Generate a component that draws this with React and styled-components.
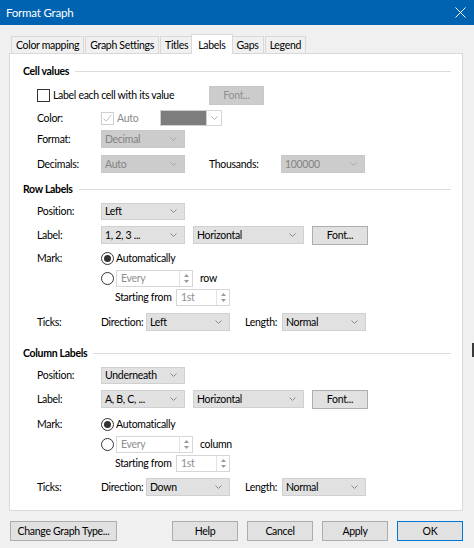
import React from 'react';
import styled, { createGlobalStyle } from 'styled-components';

const GlobalStyle = createGlobalStyle`
  html, body {
    margin: 0;
    padding: 0;
    background: #f0f0f0;
  }
  body {
    font-family: Lato, "Noto Sans", sans-serif;
    font-size: 10.5px;
    letter-spacing: -0.3px;
    color: #000;
  }
`;

const Chevron = ({ color = '#8a8a8a' }) => (
  <svg width="7" height="4" viewBox="0 0 7 4">
    <polyline points="0.5,0.5 3.5,3.5 6.5,0.5" fill="none" stroke={color} strokeWidth="1" />
  </svg>
);

const Combo = ({ w, h = 18, value, disabled }) => (
  <ComboBox $w={w} $h={h} $disabled={disabled}>
    <span>{value}</span>
    <Chevron color={disabled ? '#a8a8a8' : '#8a8a8a'} />
  </ComboBox>
);

const Spinner = ({ w, value }) => (
  <SpinBox $w={w}>
    <SpinText>{value}</SpinText>
    <SpinArrows>
      <svg width="5" height="3" viewBox="0 0 5 3"><polygon points="0,3 2.5,0 5,3" fill="#9a9a9a" /></svg>
      <svg width="5" height="3" viewBox="0 0 5 3"><polygon points="0,0 2.5,3 5,0" fill="#9a9a9a" /></svg>
    </SpinArrows>
  </SpinBox>
);

const Check = ({ checked, disabled }) => (
  <CheckBox $disabled={disabled}>
    {checked && (
      <svg width="11" height="11" viewBox="0 0 11 11">
        <polyline points="1.5,5.5 4.2,8.2 9.5,1.8" fill="none" stroke={disabled ? '#c2c2c2' : '#333'} strokeWidth="1" />
      </svg>
    )}
  </CheckBox>
);

const Heading = ({ children, mt }) => (
  <HeadRow $mt={mt}>
    <HeadText>{children}</HeadText>
    <HeadLine />
  </HeadRow>
);

const LabelsBlock = ({ kind, position, label, tick, top }) => (
  <>
    <Heading mt={top}>{kind === 'row' ? 'Row Labels' : 'Column Labels'}</Heading>
    <Row $mt={3} $h={18}>
      <FieldLabel>Position:</FieldLabel>
      <Combo w={84} h={17} value={position} />
    </Row>
    <Row $mt={5}>
      <FieldLabel>Label:</FieldLabel>
      <Combo w={84} value={label} />
      <Gap $w={8} />
      <Combo w={111} value="Horizontal" />
      <Gap $w={8} />
      <Button $w={56} $h={19}>Font...</Button>
    </Row>
    <Row $mt={kind === 'row' ? 3 : 5}>
      <FieldLabel>Mark:</FieldLabel>
      <Radio $on />
      <OptText>Automatically</OptText>
    </Row>
    <Row $mt={0}>
      <Indent />
      <Radio />
      <Gap $w={2} />
      <Spinner w={77} value="Every" />
      <Gap $w={7} />
      <span>{kind === 'row' ? 'row' : 'column'}</span>
    </Row>
    <Row $mt={-1}>
      <Indent />
      <Gap $w={14} />
      <StartLabel>Starting from</StartLabel>
      <Spinner w={54} value="1st" />
    </Row>
    <Row $mt={kind === 'row' ? 5 : 4}>
      <FieldLabel>Ticks:</FieldLabel>
      <FieldLabel $w={45}>Direction:</FieldLabel>
      <Combo w={84} value={tick} />
      <Gap $w={15} />
      <FieldLabel $w={37}>Length:</FieldLabel>
      <Combo w={84} value="Normal" />
    </Row>
  </>
);

const App = () => {
  return (
    <Window>
      <GlobalStyle />
      <TitleBar>
        <TitleText>Format Graph</TitleText>
        <svg width="11" height="11" viewBox="0 0 11 11">
          <path d="M0.5 0.5 L10.5 10.5 M10.5 0.5 L0.5 10.5" stroke="#fff" strokeWidth="1" />
        </svg>
      </TitleBar>

      <Body>
        <TabStrip>
          <Tab>Color mapping</Tab>
          <Tab>Graph Settings</Tab>
          <Tab>Titles</Tab>
          <Tab $active>Labels</Tab>
          <Tab>Gaps</Tab>
          <Tab>Legend</Tab>
        </TabStrip>

        <Panel>
          <Heading mt={7}>Cell values</Heading>
          <Row $mt={4}>
            <Check />
            <CheckText $w={156}>Label each cell with its value</CheckText>
            <Button $w={55} $h={19} disabled>Font...</Button>
          </Row>
          <Row $mt={3}>
            <FieldLabel>Color:</FieldLabel>
            <Check checked disabled />
            <CheckText $w={43} $muted>Auto</CheckText>
            <ColorWell>
              <Swatch />
              <WellArrow><Chevron color="#b0b0b0" /></WellArrow>
            </ColorWell>
          </Row>
          <Row $mt={1}>
            <FieldLabel>Format:</FieldLabel>
            <Combo w={84} value="Decimal" disabled />
          </Row>
          <Row $mt={5}>
            <FieldLabel>Decimals:</FieldLabel>
            <Combo w={84} value="Auto" disabled />
            <Gap $w={24} />
            <FieldLabel $w={72}>Thousands:</FieldLabel>
            <Combo w={84} value="100000" disabled />
          </Row>

          <LabelsBlock kind="row" top={5} position="Left" label="1, 2, 3 ..." tick="Left" />
          <LabelsBlock kind="col" top={11} position="Underneath" label="A, B, C, ..." tick="Down" />
        </Panel>

        <Footer>
          <Button $w={107} $h={20}>Change Graph Type...</Button>
          <FooterRight>
            <Button $w={66} $h={20}>Help</Button>
            <Button $w={66} $h={20}>Cancel</Button>
            <Button $w={66} $h={20}>Apply</Button>
            <Button $w={66} $h={20} $primary>OK</Button>
          </FooterRight>
        </Footer>
      </Body>

      <EdgeMark />
    </Window>
  );
};

const Window = styled.div`
  position: relative;
  width: 474px;
  height: 548px;
  overflow: hidden;
  background: #f0f0f0;
`;

const TitleBar = styled.div`
  height: 25px;
  background: #0063b1;
  color: #fff;
  display: flex;
  align-items: center;
  justify-content: space-between;
  padding: 0 8px 0 6px;
  box-sizing: border-box;
`;

const TitleText = styled.span`
  font-size: 11.5px;
  letter-spacing: -0.2px;
`;

const Body = styled.div`
  padding: 9px 11px 0 9px;
`;

const TabStrip = styled.div`
  display: flex;
  align-items: flex-end;
  height: 19px;
  padding-left: 1px;
`;

const Tab = styled.div`
  position: relative;
  box-sizing: border-box;
  height: ${p => (p.$active ? 20 : 17)}px;
  padding: 0 ${p => (p.$active ? 6 : 4)}px;
  margin: 0 ${p => (p.$active ? -2 : 0)}px ${p => (p.$active ? -1 : 0)}px ${p => (p.$active ? -2 : 1)}px;
  display: flex;
  align-items: center;
  background: ${p => (p.$active ? '#fff' : '#f0f0f0')};
  border: 1px solid #d9d9d9;
  border-bottom: none;
  z-index: ${p => (p.$active ? 2 : 1)};
  white-space: nowrap;
`;

const Panel = styled.div`
  position: relative;
  z-index: 1;
  height: 458px;
  box-sizing: border-box;
  background: #fff;
  border: 1px solid #d9d9d9;
  display: flex;
  flex-direction: column;
`;

const HeadRow = styled.div`
  display: flex;
  align-items: center;
  height: 20px;
  margin-top: ${p => p.$mt || 0}px;
  padding: 0 11px 0 13px;
`;

const HeadText = styled.span`
  font-weight: bold;
`;

const HeadLine = styled.div`
  flex: 1;
  height: 1px;
  background: #dcdcdc;
  margin-left: 6px;
`;

const Row = styled.div`
  display: flex;
  align-items: center;
  height: ${p => p.$h || 20}px;
  margin-top: ${p => p.$mt || 0}px;
  padding-left: 27px;
  white-space: nowrap;
`;

const FieldLabel = styled.span`
  width: ${p => p.$w || 64}px;
  flex-shrink: 0;
`;

const Indent = styled.span`
  width: 64px;
  flex-shrink: 0;
`;

const Gap = styled.span`
  width: ${p => p.$w}px;
  flex-shrink: 0;
`;

const StartLabel = styled.span`
  width: 61px;
  flex-shrink: 0;
`;

const OptText = styled.span`
  margin-left: 2px;
`;

const CheckText = styled.span`
  width: ${p => p.$w}px;
  flex-shrink: 0;
  margin-left: 3px;
  color: ${p => (p.$muted ? '#8a8a8a' : '#000')};
`;

const CheckBox = styled.span`
  width: 13px;
  height: 13px;
  box-sizing: border-box;
  border: 1px solid ${p => (p.$disabled ? '#cfcfcf' : '#333')};
  background: #fff;
  display: flex;
  align-items: center;
  justify-content: center;
  flex-shrink: 0;
`;

const Radio = styled.span`
  width: 13px;
  height: 13px;
  box-sizing: border-box;
  border-radius: 50%;
  border: 1px solid #333;
  background: #fff;
  display: flex;
  align-items: center;
  justify-content: center;
  flex-shrink: 0;

  &::after {
    content: '';
    display: ${p => (p.$on ? 'block' : 'none')};
    width: 7px;
    height: 7px;
    border-radius: 50%;
    background: #333;
  }
`;

const ComboBox = styled.div`
  width: ${p => p.$w}px;
  height: ${p => p.$h}px;
  box-sizing: border-box;
  flex-shrink: 0;
  display: flex;
  align-items: center;
  justify-content: space-between;
  padding: 0 7px 0 3px;
  background: ${p => (p.$disabled ? '#cccccc' : '#e1e1e1')};
  border: 1px solid ${p => (p.$disabled ? '#c8c8c8' : '#d0d0d0')};
  color: ${p => (p.$disabled ? '#838383' : '#000')};
`;

const ColorWell = styled.div`
  display: flex;
  align-items: stretch;
  height: 16px;
`;

const Swatch = styled.div`
  width: 47px;
  background: #7d7d7d;
  border: 1px solid #cfcfcf;
  box-sizing: border-box;
`;

const WellArrow = styled.div`
  width: 15px;
  box-sizing: border-box;
  border: 1px solid #d6d6d6;
  border-left: none;
  display: flex;
  align-items: center;
  justify-content: center;
`;

const SpinBox = styled.div`
  width: ${p => p.$w}px;
  height: 17px;
  box-sizing: border-box;
  flex-shrink: 0;
  display: flex;
  border: 1px solid #d6d6d6;
  background: #fff;
`;

const SpinText = styled.span`
  flex: 1;
  padding-left: 4px;
  color: #8f8f8f;
  line-height: 15px;
`;

const SpinArrows = styled.span`
  width: 12px;
  border-left: 1px solid #e2e2e2;
  display: flex;
  flex-direction: column;
  align-items: center;
  justify-content: center;
  gap: 3px;
`;

const Button = styled.button`
  width: ${p => p.$w}px;
  height: ${p => p.$h}px;
  flex-shrink: 0;
  box-sizing: border-box;
  padding: 0;
  font: inherit;
  letter-spacing: inherit;
  white-space: nowrap;
  background: ${p => (p.disabled ? '#cccccc' : '#e1e1e1')};
  color: ${p => (p.disabled ? '#8f8f8f' : '#000')};
  border: 1px solid ${p => (p.$primary ? '#0078d7' : p.disabled ? '#c8c8c8' : '#adadad')};
  border-radius: 0;
`;

const Footer = styled.div`
  display: flex;
  justify-content: space-between;
  padding: 10px 0 0 1px;
`;

const FooterRight = styled.div`
  display: flex;
  gap: 9px;
`;

const EdgeMark = styled.div`
  position: absolute;
  right: 0;
  top: 343px;
  width: 2px;
  height: 14px;
  background: #3a3a3a;
`;

export default App;
